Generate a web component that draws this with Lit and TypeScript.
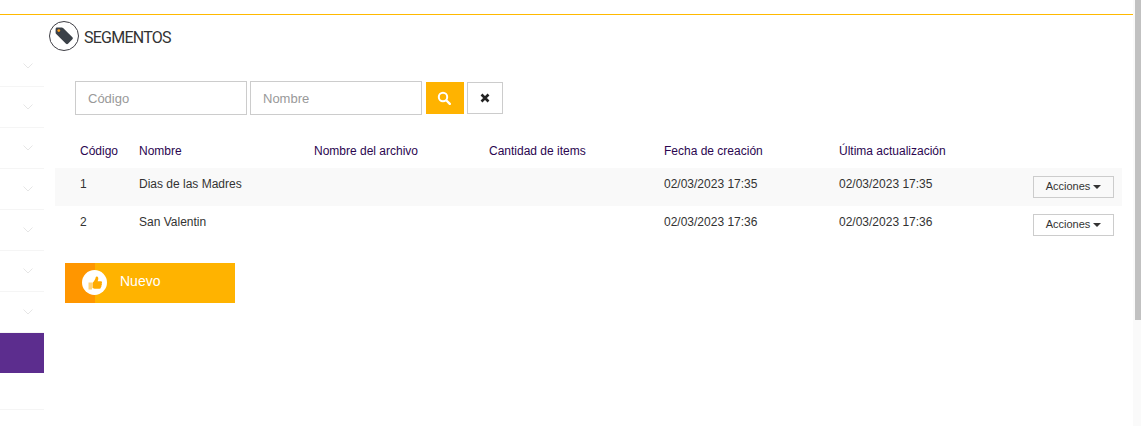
import { LitElement, css, html, svg } from 'lit';
import { customElement } from 'lit/decorators.js';

const rows = [
  { code: '1', name: 'Dias de las Madres', created: '02/03/2023 17:35', updated: '02/03/2023 17:35' },
  { code: '2', name: 'San Valentin', created: '02/03/2023 17:36', updated: '02/03/2023 17:36' },
];

const columns = ['Código', 'Nombre', 'Nombre del archivo', 'Cantidad de items', 'Fecha de creación', 'Última actualización', ''];

const tagIcon = svg`
  <path d="M8 6.500h4.800c.5 0 .9.2 1.300.5l9.300 9.300c.6.6.6 1.400 0 2l-4.400 4.400c-.6.6-1.400.6-2 0L7.200 13c-.4-.4-.6-.8-.6-1.300V8c0-.9.6-1.500 1.400-1.500z" fill="#3b4148"/>
  <circle cx="9.800" cy="9.600" r="1.400" fill="#ff9f1a"/>
`;

const thumbIcon = svg`
  <path d="M1.500 7.500h3.500v7H1.500z" fill="#ffd27a"/>
  <path d="M5.500 7.700c1.500-1 2.900-3.100 3.300-5.600.2-1.100 2.500-.8 2.500 1.300 0 1-.3 1.900-.7 2.800h3.300c1.300 0 1.500 1.500.7 2.100.6.6.5 1.600-.2 2 .3.7.1 1.500-.5 1.800.1.900-.4 1.600-1.300 1.600H8.500c-1.300 0-2-.5-3-.8z" fill="#ffab00"/>
`;

@customElement('app-root')
export class AppRoot extends LitElement {
  static styles = css`
    :host {
      display: block;
      height: 426px;
      overflow: hidden;
      background: #fff;
      color: #333;
      font: 12px/17px 'Liberation Sans', Arial, sans-serif;
    }

    .page {
      display: grid;
      grid-template-columns: 1133px 8px;
      height: 426px;
    }

    .topline {
      height: 1px;
      margin-top: 14px;
      background: #ffb900;
    }

    .body {
      display: grid;
      grid-template-columns: 44px 1fr;
    }

    .sidebar {
      padding-top: 31px;
    }

    .side-item {
      display: flex;
      box-sizing: border-box;
      height: 41px;
      padding-right: 11px;
      align-items: center;
      justify-content: flex-end;
      border-bottom: 1px solid #f5f5f5;
    }

    .side-item svg {
      display: block;
      width: 10px;
      height: 6px;
    }

    .side-item.active {
      height: 40px;
      background: #5c2d8e;
      border-bottom: 0;
    }

    .side-item.last {
      height: 37px;
    }

    .main {
      padding: 5px 11px 0 5px;
    }

    .title {
      display: flex;
      align-items: center;
      gap: 5px;
      height: 31px;
      color: #333;
      font: 16px/17px Roboto, 'Liberation Sans', sans-serif;
      letter-spacing: -0.75px;
    }

    .title span {
      padding-top: 3px;
    }

    .title-icon {
      display: block;
      width: 30px;
      height: 30px;
    }

    .filters {
      display: flex;
      gap: 3px;
      margin: 30px 0 0 26px;
    }

    .field {
      box-sizing: border-box;
      width: 172px;
      height: 34px;
      padding: 0 12px;
      border: 1px solid #ccc;
      color: #999;
      font-size: 13px;
      line-height: 34px;
    }

    .search,
    .clear {
      display: flex;
      box-sizing: border-box;
      height: 32px;
      margin: 1px 0 0;
      align-items: center;
      justify-content: center;
    }

    .search {
      width: 38px;
      margin-left: 1px;
      padding-right: 2px;
      background: #ffb300;
    }

    .clear {
      width: 36px;
      margin-left: 0;
      border: 1px solid #ccc;
    }

    .table {
      display: grid;
      grid-template-columns: 84px repeat(5, 175px) 1fr;
      margin: 19px 0 0 6px;
    }

    .row {
      display: grid;
      grid-column: 1 / -1;
      grid-template-columns: subgrid;
      align-items: start;
      height: 38px;
      padding-top: 8px;
      box-sizing: border-box;
    }

    .row.head {
      height: 34px;
      padding-top: 9px;
      color: #2b0650;
    }

    .row.odd {
      background: #f9f9f9;
    }

    .row > div:first-child {
      padding-left: 25px;
    }

    .actions {
      display: flex;
      justify-content: flex-end;
      padding-right: 8px;
    }

    .action-btn {
      display: flex;
      box-sizing: border-box;
      width: 81px;
      height: 22px;
      padding-bottom: 2px;
      align-items: center;
      justify-content: center;
      gap: 3px;
      border: 1px solid #ccc;
      font-size: 11px;
    }

    .caret {
      width: 0;
      height: 0;
      margin-top: 2px;
      border-top: 4px solid #333;
      border-left: 4px solid transparent;
      border-right: 4px solid transparent;
    }

    .new-btn {
      display: flex;
      width: 170px;
      height: 40px;
      margin: 19px 0 0 16px;
      background: linear-gradient(90deg, #ff9600 30px, #ffb300 30px);
      color: #fff;
      font-size: 14px;
    }

    .new-icon {
      display: flex;
      width: 25px;
      height: 25px;
      margin: 7px 13px 0 17px;
      border-radius: 50%;
      background: #fff;
      align-items: center;
      justify-content: center;
    }

    .new-icon svg {
      display: block;
      width: 16px;
      height: 16px;
    }

    .new-label {
      margin-top: 10px;
    }

    .scrollbar {
      display: flex;
      justify-content: flex-end;
      background: #fafafa;
    }

    .thumb {
      width: 6px;
      height: 320px;
      background: #c1c1c1;
    }
  `;

  private renderSideItem() {
    return html`
      <div class="side-item">
        <svg viewBox="0 0 10 6"><path d="M.5.500 5 5 9.500.500" fill="none" stroke="#e6e6e6" stroke-width="1"/></svg>
      </div>
    `;
  }

  render() {
    return html`
      <div class="page">
        <div>
          <div class="topline"></div>
          <div class="body">
            <nav class="sidebar">
              ${[0, 1, 2, 3, 4, 5, 6].map(() => this.renderSideItem())}
              <div class="side-item active"></div>
              <div class="side-item last"></div>
            </nav>
            <main class="main">
              <div class="title">
                <svg class="title-icon" viewBox="0 0 30 30">
                  <circle cx="15" cy="15" r="14.500" fill="none" stroke="#3f3f46" stroke-width="1"/>
                  ${tagIcon}
                </svg>
                <span>SEGMENTOS</span>
              </div>
              <div class="filters">
                <div class="field">Código</div>
                <div class="field">Nombre</div>
                <div class="search">
                  <svg width="14" height="14" viewBox="0 0 14 14">
                    <circle cx="6" cy="6" r="4.200" fill="none" stroke="#fff" stroke-width="2"/>
                    <path d="M9.500 9.500 12.800 12.800" stroke="#fff" stroke-width="2.400" stroke-linecap="round"/>
                  </svg>
                </div>
                <div class="clear">
                  <svg width="10" height="10" viewBox="0 0 10 10">
                    <path d="M1.500 1.500 8.500 8.500M8.500 1.500 1.500 8.500" stroke="#222" stroke-width="2.600"/>
                  </svg>
                </div>
              </div>
              <div class="table">
                <div class="row head">
                  ${columns.map((c) => html`<div>${c}</div>`)}
                </div>
                ${rows.map(
                  (r, i) => html`
                    <div class="row ${i % 2 === 0 ? 'odd' : ''}">
                      <div>${r.code}</div>
                      <div>${r.name}</div>
                      <div></div>
                      <div></div>
                      <div>${r.created}</div>
                      <div>${r.updated}</div>
                      <div class="actions">
                        <div class="action-btn">Acciones <span class="caret"></span></div>
                      </div>
                    </div>
                  `,
                )}
              </div>
              <div class="new-btn">
                <span class="new-icon"><svg viewBox="0 0 16 16">${thumbIcon}</svg></span>
                <span class="new-label">Nuevo</span>
              </div>
            </main>
          </div>
        </div>
        <div class="scrollbar"><div class="thumb"></div></div>
      </div>
    `;
  }
}
